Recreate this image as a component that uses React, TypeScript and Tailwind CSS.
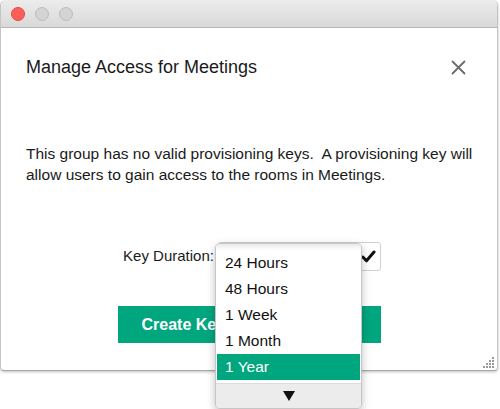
import React from "react";

const font = { fontFamily: '"Liberation Sans", Arial, Helvetica, sans-serif' };

function CloseIcon() {
  return (
    <svg width="15" height="15" viewBox="0 0 15 15">
      <path d="M1.5 1.5 L13.5 13.5 M13.5 1.5 L1.5 13.5" stroke="#6b6b6b" strokeWidth="1.8" strokeLinecap="round" />
    </svg>
  );
}

function Grip() {
  const dots: [number, number][] = [];
  for (let r = 0; r < 4; r++) {
    for (let c = 0; c <= r; c++) {
      dots.push([10 - c * 3, 1 + r * 3]);
    }
  }
  return (
    <svg width="12" height="12" viewBox="0 0 12 12">
      {dots.map(([x, y], i) => (
        <rect key={i} x={x} y={y} width="2" height="2" fill="#9a9a9a" />
      ))}
    </svg>
  );
}

export default function App() {
  const items = ["24 Hours", "48 Hours", "1 Week", "1 Month", "1 Year"];
  return (
    <div className="relative w-[500px] h-[409px] bg-white overflow-hidden" style={font}>
      {/* Window */}
      <div className="w-[498px] h-[371px] flex flex-col border-l border-r border-b border-[#c4c4c4] border-b-[#a8a8a8] rounded-t-[6px] rounded-b-[4px] shadow-[0_1px_3px_rgba(0,0,0,0.25)] bg-white overflow-hidden">
        {/* Title bar */}
        <div className="h-[28px] shrink-0 flex items-center gap-[10px] pl-[10px] bg-gradient-to-b from-[#ececec] to-[#d9d9d9] border-b border-[#b4b4b4]">
          <div className="w-[14px] h-[14px] rounded-full bg-[#fe5f57] border border-[#e2463f]" />
          <div className="w-[14px] h-[14px] rounded-full bg-[#d3d3d3] border border-[#bdbdbd]" />
          <div className="w-[14px] h-[14px] rounded-full bg-[#d3d3d3] border border-[#bdbdbd]" />
        </div>
        {/* Content */}
        <div className="relative flex-1 flex flex-col">
          <div className="flex items-center justify-between pt-[28px] pl-[25px] pr-[31px]">
            <div className="text-[18px] leading-[22px] text-[#1a1a1a]">Manage Access for Meetings</div>
            <CloseIcon />
          </div>
          <div className="mt-[65px] pl-[25px] pr-[10px] text-[15.5px] leading-[21px] text-[#1a1a1a] whitespace-pre">
            {"This group has no valid provisioning keys.  A provisioning key will\nallow users to gain access to the rooms in Meetings."}
          </div>
          <div className="mt-[57px] flex items-center justify-center gap-[4px] pl-[6px]">
            <span className="text-[15px] text-[#1a1a1a]">Key Duration:</span>
            <div className="w-[163px] h-[29px] border border-[#d0d0d0] rounded-[3px] bg-white flex items-center justify-end pr-[4px]">
              <svg width="15" height="13" viewBox="0 0 15 13">
                <path d="M1.8 7 L5.5 10.8 L13 2" stroke="#111" strokeWidth="3" fill="none" strokeLinecap="round" strokeLinejoin="round" />
              </svg>
            </div>
          </div>
          <div className="mt-[35px] flex justify-center">
            <div className="w-[263px] h-[37px] bg-[#00a67e] flex items-center pl-[24px] text-white font-bold text-[16px]">
              Create Key
            </div>
          </div>
          <div className="absolute right-[3px] bottom-[2px]">
            <Grip />
          </div>
        </div>
      </div>

      {/* Dropdown menu overlay */}
      <div className="absolute left-[215px] top-[243px] w-[147px] h-[166px] bg-white border border-[#c6c6c6] rounded-[5px] shadow-[0_3px_8px_rgba(0,0,0,0.25)] flex flex-col overflow-hidden">
        <div className="h-[6px] shrink-0 bg-gradient-to-b from-[#e9e9e9] to-white" />
        <div className="flex flex-col px-[1px]">
          {items.map((it) => (
            <div
              key={it}
              className={
                "h-[26px] flex items-center pl-[8px] text-[15.5px] " +
                (it === "1 Year" ? "bg-[#00a67e] text-white" : "text-[#111]")
              }
            >
              {it}
            </div>
          ))}
        </div>
        <div className="mt-[3px] flex-1 bg-[#ececec] border-t border-[#dcdcdc] flex items-center justify-center">
          <svg width="12" height="10" viewBox="0 0 12 10">
            <path d="M0 0 L12 0 L6 10 Z" fill="#111" />
          </svg>
        </div>
      </div>
    </div>
  );
}
